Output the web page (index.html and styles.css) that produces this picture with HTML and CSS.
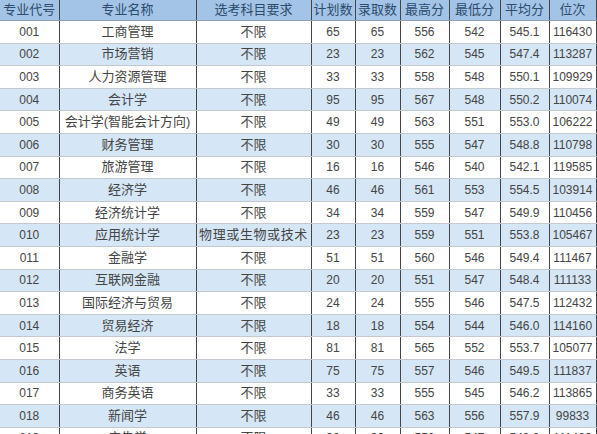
FILE: index.html
```html
<!DOCTYPE html>
<html lang="zh">
<head>
<meta charset="utf-8">
<title>专业录取</title>
<link rel="stylesheet" href="styles.css">
</head>
<body>
<table class="score-table">
<colgroup>
<col class="c-code"><col class="c-name"><col class="c-req"><col class="c-plan"><col class="c-adm"><col class="c-max"><col class="c-min"><col class="c-avg"><col class="c-rank">
</colgroup>
<thead>
<tr><th>专业代号</th><th>专业名称</th><th>选考科目要求</th><th>计划数</th><th>录取数</th><th>最高分</th><th>最低分</th><th>平均分</th><th>位次</th></tr>
</thead>
<tbody>
<tr><td>001</td><td>工商管理</td><td>不限</td><td>65</td><td>65</td><td>556</td><td>542</td><td>545.1</td><td>116430</td></tr>
<tr><td>002</td><td>市场营销</td><td>不限</td><td>23</td><td>23</td><td>562</td><td>545</td><td>547.4</td><td>113287</td></tr>
<tr><td>003</td><td>人力资源管理</td><td>不限</td><td>33</td><td>33</td><td>558</td><td>548</td><td>550.1</td><td>109929</td></tr>
<tr><td>004</td><td>会计学</td><td>不限</td><td>95</td><td>95</td><td>567</td><td>548</td><td>550.2</td><td>110074</td></tr>
<tr><td>005</td><td>会计学(智能会计方向)</td><td>不限</td><td>49</td><td>49</td><td>563</td><td>551</td><td>553.0</td><td>106222</td></tr>
<tr><td>006</td><td>财务管理</td><td>不限</td><td>30</td><td>30</td><td>555</td><td>547</td><td>548.8</td><td>110798</td></tr>
<tr><td>007</td><td>旅游管理</td><td>不限</td><td>16</td><td>16</td><td>546</td><td>540</td><td>542.1</td><td>119585</td></tr>
<tr><td>008</td><td>经济学</td><td>不限</td><td>46</td><td>46</td><td>561</td><td>553</td><td>554.5</td><td>103914</td></tr>
<tr><td>009</td><td>经济统计学</td><td>不限</td><td>34</td><td>34</td><td>559</td><td>547</td><td>549.9</td><td>110456</td></tr>
<tr><td>010</td><td>应用统计学</td><td class="tight">物理或生物或技术</td><td>23</td><td>23</td><td>559</td><td>551</td><td>553.8</td><td>105467</td></tr>
<tr><td>011</td><td>金融学</td><td>不限</td><td>51</td><td>51</td><td>560</td><td>546</td><td>549.4</td><td>111467</td></tr>
<tr><td>012</td><td>互联网金融</td><td>不限</td><td>20</td><td>20</td><td>551</td><td>547</td><td>548.4</td><td>111133</td></tr>
<tr><td>013</td><td>国际经济与贸易</td><td>不限</td><td>24</td><td>24</td><td>555</td><td>546</td><td>547.5</td><td>112432</td></tr>
<tr><td>014</td><td>贸易经济</td><td>不限</td><td>18</td><td>18</td><td>554</td><td>544</td><td>546.0</td><td>114160</td></tr>
<tr><td>015</td><td>法学</td><td>不限</td><td>81</td><td>81</td><td>565</td><td>552</td><td>553.7</td><td>105077</td></tr>
<tr><td>016</td><td>英语</td><td>不限</td><td>75</td><td>75</td><td>557</td><td>546</td><td>549.5</td><td>111837</td></tr>
<tr><td>017</td><td>商务英语</td><td>不限</td><td>33</td><td>33</td><td>555</td><td>545</td><td>546.2</td><td>113865</td></tr>
<tr><td>018</td><td>新闻学</td><td>不限</td><td>46</td><td>46</td><td>563</td><td>556</td><td>557.9</td><td>99833</td></tr>
<tr><td>019</td><td>广告学</td><td>不限</td><td>30</td><td>30</td><td>556</td><td>547</td><td>549.0</td><td>111420</td></tr>
</tbody>
</table>
</body>
</html>
```

FILE: styles.css
```css
html, body {
  margin: 0;
  padding: 0;
  background: #ffffff;
  overflow: hidden;
}

.score-table {
  table-layout: fixed;
  border-collapse: collapse;
  width: 596px;
  font-family: "Liberation Sans", "Noto Sans CJK SC", sans-serif;
  font-size: 12px;
  color: #454545;
}

.c-code { width: 59px; }
.c-name { width: 137px; }
.c-req  { width: 115px; }
.c-plan { width: 44px; }
.c-adm  { width: 45px; }
.c-max  { width: 49px; }
.c-min  { width: 51px; }
.c-avg  { width: 49px; }
.c-rank { width: 47px; }

.score-table th,
.score-table td {
  text-align: center;
  vertical-align: middle;
  padding: 0;
  white-space: nowrap;
  overflow: hidden;
  border-left: 1px solid #454545;
  border-right: 1px solid #454545;
  border-bottom: 1px solid #c4c9cf;
  line-height: 16px;
}

.score-table th:first-child,
.score-table td:first-child {
  border-left: none;
}

.score-table th {
  height: 20px;
  background: #a3c4e6;
  color: #2c4b6d;
  font-weight: normal;
  font-size: 13px;
  border-bottom: 1px solid #8e9fb3;
}

.score-table td {
  height: 21.6px;
}

.score-table td:nth-child(2),
.score-table td:nth-child(3) {
  font-size: 13px;
}

.score-table tbody tr:nth-child(even) td {
  background: #d5e6f6;
}

.score-table td.tight {
  letter-spacing: 0.6px;
}
```
